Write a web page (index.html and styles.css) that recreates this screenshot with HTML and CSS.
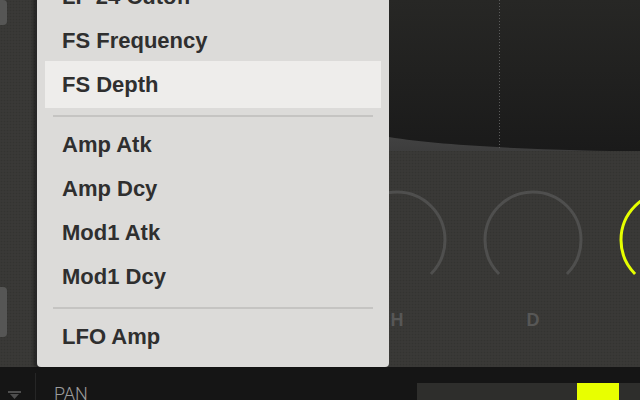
FILE: index.html
```html
<!DOCTYPE html>
<html>
<head>
<meta charset="utf-8">
<link rel="stylesheet" href="styles.css">
</head>
<body>
<div class="app">
  <div class="main">
    <div class="side">
      <div class="tab tab-top"></div>
      <div class="tab tab-mid"></div>
    </div>
    <div class="panel">
      <div class="display">
        <svg width="605" height="151" viewBox="0 0 605 151">
          <defs>
            <linearGradient id="scr" x1="0" y1="0" x2="0" y2="1">
              <stop offset="0" stop-color="#272725"/>
              <stop offset="1" stop-color="#1a1a1a"/>
            </linearGradient>
            <linearGradient id="bev" x1="0" y1="0" x2="0" y2="1">
              <stop offset="0.8" stop-color="#474747"/>
              <stop offset="1" stop-color="#3d3d3d"/>
            </linearGradient>
          </defs>
          <rect x="0" y="0" width="605" height="151" fill="url(#bev)"/>
          <path d="M0 0H605V151C534 151 414 147 354 137C250 120 100 100 0 90Z" fill="url(#scr)"/>
          <line x1="464.5" y1="0" x2="464.5" y2="148" stroke="#5c5c5c" stroke-width="1" stroke-dasharray="1 2"/>
        </svg>
      </div>
      <div class="knobs">
        <div class="knob">
          <svg width="104" height="104" viewBox="0 0 104 104"><path d="M18.06 85.94A48 48 0 1 1 85.94 85.94" class="arc"/></svg>
          <span class="klabel">A</span>
        </div>
        <div class="knob">
          <svg width="104" height="104" viewBox="0 0 104 104"><path d="M18.06 85.94A48 48 0 1 1 85.94 85.94" class="arc"/></svg>
          <span class="klabel">H</span>
        </div>
        <div class="knob">
          <svg width="104" height="104" viewBox="0 0 104 104"><path d="M18.06 85.94A48 48 0 1 1 85.94 85.94" class="arc"/></svg>
          <span class="klabel">D</span>
        </div>
        <div class="knob">
          <svg width="104" height="104" viewBox="0 0 104 104"><path d="M18.06 85.94A48 48 0 1 1 85.94 85.94" class="arc on"/></svg>
        </div>
      </div>
    </div>
  </div>
  <div class="bottombar">
    <div class="bb-icon">
      <svg width="14" height="10" viewBox="0 0 14 10"><rect x="0" y="1" width="13" height="2" fill="#4e4e4e"/><polygon points="2,4 11,4 6.5,9" fill="#4e4e4e"/></svg>
    </div>
    <div class="bb-div"></div>
    <div class="bb-label">PAN</div>
    <div class="bb-meter"><div class="bb-fill" style="margin-left:160px;width:42px"></div></div>
  </div>
  <div class="menu">
    <div class="mi">LP 24 Cutoff</div>
    <div class="mi">FS Frequency</div>
    <div class="mi active">FS Depth</div>
    <div class="sep"></div>
    <div class="mi">Amp Atk</div>
    <div class="mi">Amp Dcy</div>
    <div class="mi">Mod1 Atk</div>
    <div class="mi">Mod1 Dcy</div>
    <div class="sep"></div>
    <div class="mi">LFO Amp</div>
  </div>
</div>
</body>
</html>
```
FILE: styles.css
```css
html, body {
  margin: 0;
  padding: 0;
}
body {
  width: 640px;
  height: 400px;
  overflow: hidden;
  background: #393836;
  font-family: "Liberation Sans", Arial, sans-serif;
}
.app {
  position: relative;
  width: 640px;
  height: 400px;
  overflow: hidden;
}
.main {
  display: flex;
  height: 367px;
  background-color: #3a3937;
  background-image: radial-gradient(circle, #343331 0.7px, transparent 1.1px);
  background-size: 3px 3px;
}
.side {
  width: 35px;
  flex: 0 0 35px;
  display: flex;
  flex-direction: column;
}
.tab {
  width: 7px;
  background: #565655;
  border-radius: 0 4px 4px 0;
}
.tab-top {
  height: 25px;
}
.tab-mid {
  margin-top: 262px;
  height: 50px;
}
.panel {
  flex: 1;
  overflow: hidden;
  display: flex;
  flex-direction: column;
}
.display {
  height: 151px;
  flex: 0 0 151px;
}
.display svg {
  display: block;
}
.knobs {
  display: flex;
  flex-wrap: nowrap;
  padding-left: 158px;
  padding-top: 37px;
}
.knob {
  flex: 0 0 136px;
  display: flex;
  flex-direction: column;
  align-items: center;
}
.knob svg {
  display: block;
}
.arc {
  fill: none;
  stroke: #4f4f4e;
  stroke-width: 3;
}
.arc.on {
  stroke: #e6ff00;
}
.klabel {
  margin-top: 18px;
  font-weight: 700;
  font-size: 18px;
  line-height: 20px;
  color: #575756;
}
.bottombar {
  display: flex;
  align-items: flex-start;
  height: 33px;
  background: #151515;
}
.bb-icon {
  width: 35px;
  flex: 0 0 35px;
  height: 33px;
  padding: 23px 0 0 8px;
  box-sizing: border-box;
}
.bb-icon svg {
  display: block;
}
.bb-div {
  width: 1px;
  height: 27px;
  margin-top: 6px;
  background: #262626;
}
.bb-label {
  padding: 17px 0 0 18px;
  font-family: Roboto, "Liberation Sans", sans-serif;
  font-weight: 300;
  font-size: 18px;
  line-height: 20px;
  color: #9c9c9c;
}
.bb-meter {
  margin-left: auto;
  margin-top: 16px;
  width: 223px;
  height: 17px;
  background: #2e2e2c;
  display: flex;
}
.bb-fill {
  height: 100%;
  background: #e8ff00;
}
.menu {
  position: absolute;
  left: 37px;
  top: -25px;
  width: 352px;
  background: #dcdbd9;
  border-radius: 0 0 4px 4px;
  padding-bottom: 8px;
  box-shadow: -2px 0 0 #272727, -4px 0 3px rgba(0, 0, 0, 0.3);
}
.mi {
  height: 44px;
  line-height: 44px;
  margin: 0 8px;
  padding-left: 17px;
  font-weight: 700;
  font-size: 22px;
  color: #2f2f2f;
  white-space: nowrap;
}
.mi.active {
  background: #eeedeb;
  box-shadow: 0 -2px 0 #eeedeb, 0 1px 0 #eeedeb;
}
.sep {
  height: 2px;
  margin: 8px 16px 6px;
  background: #c5c4c2;
}
```
